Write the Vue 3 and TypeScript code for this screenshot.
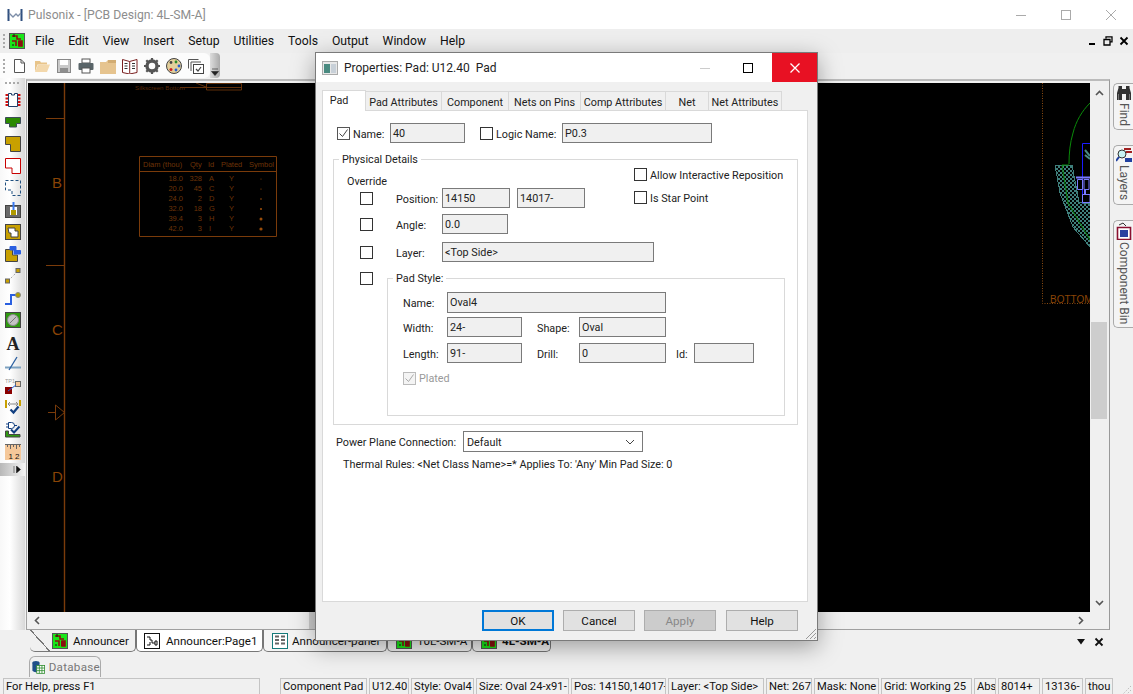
<script setup lang="ts">
interface Cell {
  text: string;
  width: number;
}

interface DocTab {
  name: string;
  width: number;
  kind: string;
  bold?: boolean;
}

const menus = ['File', 'Edit', 'View', 'Insert', 'Setup', 'Utilities', 'Tools', 'Output', 'Window', 'Help'];

const dialogTabs = [
  { name: 'Pad Attributes', width: 76 },
  { name: 'Component', width: 67 },
  { name: 'Nets on Pins', width: 72 },
  { name: 'Comp Attributes', width: 85 },
  { name: 'Net', width: 43 },
  { name: 'Net Attributes', width: 73 },
];

const docTabs: DocTab[] = [
  { name: 'Announcer', width: 106, kind: 'pcb' },
  { name: 'Announcer:Page1', width: 127, kind: 'sch' },
  { name: 'Announcer-panel', width: 124, kind: 'panel' },
  { name: '10L-SM-A', width: 85, kind: 'pcb' },
  { name: '4L-SM-A', width: 79, kind: 'pcb', bold: true },
];

const statusCells: Cell[] = [
  { text: 'Component Pad', width: 87 },
  { text: 'U12.40', width: 40 },
  { text: 'Style: Oval4', width: 63 },
  { text: 'Size: Oval 24-x91-', width: 93 },
  { text: 'Pos: 14150,14017-', width: 95 },
  { text: 'Layer: <Top Side>', width: 96 },
  { text: 'Net: 267', width: 46 },
  { text: 'Mask: None', width: 65 },
  { text: 'Grid: Working 25', width: 91 },
  { text: 'Abs', width: 22 },
  { text: '8014+', width: 42 },
  { text: '13136-', width: 41 },
  { text: 'thou', width: 28 },
];

const holeRows = [
  ['18.0', '328', 'A', 0.5],
  ['20.0', '45', 'C', 0.6],
  ['24.0', '2', 'D', 0.8],
  ['32.0', '18', 'G', 1.1],
  ['39.4', '3', 'H', 1.5],
  ['42.0', '3', 'I', 1.6],
] as const;

const leftTools = Array.from({ length: 17 }, (_, i) => i);
</script>

<template>
  <div class="app">
    <svg class="defs" width="0" height="0">
      <defs>
        <symbol id="pcb" viewBox="0 0 16 16">
          <rect x="0.5" y="0.5" width="15" height="15" fill="#19e619" stroke="#555" />
          <path d="M3 3h5v3h4M3 8h4v5M10 8h3v5h-3z" fill="none" stroke="#8a1010" stroke-width="1.6" />
          <rect x="9" y="8" width="4" height="5" fill="#8a1010" />
          <path d="M5 1v3M3 12h2" stroke="#111" />
        </symbol>
        <pattern id="hatch" width="4" height="4" patternUnits="userSpaceOnUse">
          <rect width="4" height="4" fill="#000" />
          <rect width="2" height="2" fill="#3f7f7c" />
          <rect x="2" y="2" width="2" height="2" fill="#3f7f7c" />
        </pattern>
      </defs>
    </svg>

    <!-- Title bar -->
    <div class="titlebar">
      <svg class="logo" width="16" height="14" viewBox="0 0 16 14">
        <path d="M1.500 1v12M14.500 1v12" stroke="#2f4f7f" stroke-width="2" />
        <path d="M2 5l4 4 3-3 2 2 3-3" fill="none" stroke="#7d8ea8" stroke-width="1.300" />
      </svg>
      <span class="app-title">Pulsonix - [PCB Design: 4L-SM-A]</span>
      <div class="win-btns">
        <svg width="12" height="12" viewBox="0 0 12 12"><path d="M1 6.500h10" stroke="#aaa" /></svg>
        <svg width="12" height="12" viewBox="0 0 12 12"><rect x="1.500" y="1.500" width="9" height="9" fill="none" stroke="#aaa" /></svg>
        <svg width="12" height="12" viewBox="0 0 12 12"><path d="M1 1l10 10M11 1L1 11" stroke="#aaa" /></svg>
      </div>
    </div>

    <!-- Menu bar -->
    <div class="menubar">
      <span class="grip-v"></span>
      <svg class="menu-logo" width="16" height="16"><use href="#pcb" /></svg>
      <span v-for="m in menus" :key="m" class="menu-item">{{ m }}</span>
      <div class="mdi-btns">
        <svg width="10" height="10" viewBox="0 0 10 10"><path d="M2 8h6" stroke="#000" stroke-width="2" /></svg>
        <svg width="10" height="10" viewBox="0 0 10 10"><path d="M3 2.500V.8h6v5H7.500M1 3.500h6v5.500H1z" fill="none" stroke="#000" stroke-width="1.300" /></svg>
        <svg width="10" height="10" viewBox="0 0 10 10"><path d="M1.500 1.500l7 7M8.500 1.500l-7 7" stroke="#000" stroke-width="1.800" /></svg>
      </div>
    </div>

    <!-- Main toolbar -->
    <div class="toolbar-row">
      <div class="toolbar">
        <span class="grip-v"></span>
        <svg width="16" height="16" viewBox="0 0 16 16"><path d="M2.500 1.500h6.500l3.500 3.500v9.500h-10z" fill="#fff" stroke="#555" /><path d="M9 1.500V5h3.500" fill="none" stroke="#555" /></svg>
        <svg width="16" height="16" viewBox="0 0 16 16"><path d="M1 3h5l1 1.500h6v2H3.500L1 14z" fill="#e8c48a" /><path d="M1 14l3-7.500h12L13 14z" fill="#f3d8ac" /></svg>
        <svg width="16" height="16" viewBox="0 0 16 16"><rect x="1.500" y="1.500" width="13" height="13" fill="#c9c9c9" stroke="#888" /><rect x="4" y="2" width="8" height="5" fill="#fff" /><rect x="4" y="10" width="8" height="4.500" fill="#8e8e8e" /></svg>
        <svg width="16" height="16" viewBox="0 0 16 16"><rect x="4" y="1" width="8" height="4" fill="#fff" stroke="#555" /><rect x="0.500" y="5" width="15" height="7" rx="1" fill="#596468" /><rect x="4" y="10" width="8" height="5" fill="#fff" stroke="#555" /></svg>
        <svg width="16" height="16" viewBox="0 0 16 16"><path d="M0 4h6l2-2h8v14H0z" fill="#e6c48f" /><path d="M8 2h8v3H8z" fill="#d2ac72" /></svg>
        <svg width="16" height="16" viewBox="0 0 16 16"><path d="M0.500 1.500l7 2 7.500-2v13l-7.500 1.500-7-1.500z" fill="#fff" stroke="#7a2020" /><path d="M7.700 3.500v12" stroke="#7a2020" /><path d="M2.500 5.500h3M2.500 8h3M2.500 10.500h3M10 5.500h3M10 8h3M10 10.500h3" stroke="#333" /></svg>
        <svg width="16" height="16" viewBox="0 0 16 16"><circle cx="8" cy="8" r="5" fill="none" stroke="#555" stroke-width="3.400" /><path d="M8 0v3M8 13v3M0 8h3M13 8h3M2.300 2.300l2.200 2.200M11.500 11.500l2.200 2.200M13.700 2.300l-2.200 2.200M4.500 11.500l-2.200 2.200" stroke="#555" stroke-width="2.200" /></svg>
        <svg width="16" height="16" viewBox="0 0 16 16"><ellipse cx="8" cy="8" rx="7.500" ry="7.500" fill="#e3cf9b" stroke="#444" /><circle cx="5" cy="4.500" r="1.400" fill="#444" /><circle cx="10" cy="4" r="1.400" fill="#2a8a2a" /><circle cx="13" cy="8" r="1.400" fill="#2a5fd0" /><circle cx="10" cy="12" r="1.400" fill="#2a5fd0" /><circle cx="5" cy="11.500" r="1.500" fill="#d02020" /></svg>
        <svg width="16" height="16" viewBox="0 0 16 16"><path d="M.5 1.500h10M.5 1.500v9M3 4h10M3 4v9" fill="none" stroke="#555" /><rect x="5.500" y="6.500" width="10" height="9" fill="#fff" stroke="#444" /><path d="M8 11l2 2 3-4" fill="none" stroke="#444" stroke-width="1.200" /></svg>
      </div>
      <div class="tool-more">
        <svg width="8" height="8" viewBox="0 0 8 8"><path d="M1 1h6M0.500 3.500h7L4 7.500z" fill="#222" stroke="#222" stroke-width=".6" /></svg>
      </div>
    </div>

    <!-- Workspace -->
    <div class="workspace">
      <div class="lefttools">
        <span class="grip-h"></span>
        <div v-for="i in leftTools" :key="i" class="lt">
          <svg width="16" height="16" viewBox="0 0 16 16">
            <template v-if="i === 0">
              <path d="M3.500 1.500h3v1.500h3V1.500h3v13h-9z" fill="#fff" stroke="#1f3f6a" />
              <path d="M.5 3h2.500M.5 6.500h2.500M.5 10h2.500M.5 13h2.500M13 3h2.500M13 6.500h2.500M13 10h2.500M13 13h2.500" stroke="#d01010" stroke-width="1.800" />
            </template>
            <path v-else-if="i === 1" d="M.5 3.500h15v6h-4v3.500h-7V9.500h-4z" fill="#2a8a00" stroke="#3c4c58" />
            <path v-else-if="i === 2" d="M.5 .5h15v15H5.500V8.500h-5z" fill="#c8a000" stroke="#444" />
            <path v-else-if="i === 3" d="M.5 .5h15v15H7V10H.5z" fill="#fff" stroke="#c80000" />
            <path v-else-if="i === 4" d="M.5 .5h15v15H7V10H.5z" fill="none" stroke="#1f4f7f" stroke-dasharray="3 2" />
            <template v-else-if="i === 5">
              <rect x=".5" y="3.500" width="15" height="12" fill="#6a6a6a" stroke="#444" />
              <rect x="5" y="5" width="7" height="8" fill="#fff" />
              <rect x="6" y="8" width="5" height="5" fill="#b09a00" />
              <path d="M8.500 0v8" stroke="#3a7af0" stroke-width="2" />
            </template>
            <template v-else-if="i === 6">
              <rect x=".5" y=".5" width="15" height="15" fill="#c8a000" stroke="#444" />
              <path d="M3 4h7v3h3v6H6V9H4z" fill="#fff" stroke="#444" />
            </template>
            <template v-else-if="i === 7">
              <path d="M.5 3.500h7V9h5v6.500H.5z" fill="#c8a000" stroke="#444" />
              <path d="M5 .5h6v4h4.500V8H9V4H5z" fill="#2a5fe0" stroke="#2a5fe0" />
            </template>
            <template v-else-if="i === 8">
              <path d="M3 13L13 3" stroke="#aaa" stroke-dasharray="2 2" />
              <rect x="11" y=".5" width="4" height="4" fill="#c8a000" stroke="#666" />
              <rect x=".5" y="11" width="4" height="4" fill="#c8a000" stroke="#666" />
            </template>
            <template v-else-if="i === 9">
              <path d="M0 14h6V5h8" fill="none" stroke="#2a5fe0" stroke-width="2" />
              <circle cx="13" cy="5" r="2.500" fill="#b0a000" stroke="#888" />
            </template>
            <template v-else-if="i === 10">
              <rect x=".5" y=".5" width="15" height="15" fill="#2f9a10" stroke="#444" />
              <circle cx="8" cy="8" r="5.500" fill="#c4c4c4" stroke="#888" />
              <path d="M5 11l6-6" stroke="#777" />
            </template>
            <text v-else-if="i === 11" class="tool-a" x="1.500" y="15.500">A</text>
            <template v-else-if="i === 12">
              <path d="M0 11.500h16" stroke="#7ea2c0" stroke-width="2" />
              <path d="M4 14L12 1" stroke="#2a5fa0" stroke-width="1.300" />
            </template>
            <template v-else-if="i === 13">
              <text class="tool-tp" x="0" y="5">TP1</text>
              <rect x="0" y="9" width="7" height="7" fill="#8a0000" />
              <rect x="10.500" y="3.500" width="5" height="5" fill="#f5c89a" stroke="#666" />
              <path d="M3 13l8-6" stroke="#2a5fd0" />
            </template>
            <template v-else-if="i === 14">
              <rect x="0" y="0" width="2" height="8" fill="#c8a000" />
              <rect x="14" y="0" width="2" height="6" fill="#c8a000" />
              <path d="M3 4h10M3 4l2-2M3 4l2 2M13 4l-2-2M13 4l-2 2" stroke="#888" />
              <path d="M5.500 9.500l3 3 5-6" fill="none" stroke="#123f80" stroke-width="2.200" />
            </template>
            <template v-else-if="i === 15">
              <path d="M.5 15V9h3v3.500H15V15z" fill="#2f9a10" stroke="#444" />
              <path d="M3.500 .5h3a2.500 2.500 0 010 6h-3zM1 2h2.500M1 5h2.500M9 3.500h3" fill="#fff" stroke="#123f80" />
              <path d="M6 7.500l3 3 5.500-6" fill="none" stroke="#123f80" stroke-width="2" />
            </template>
            <template v-else>
              <rect x="0" y="0" width="16" height="16" fill="#f5c89a" />
              <path d="M0 .5h16M2.500 0v3M5.500 0v5M8.500 0v3M11.500 0v5M14.500 0v3" stroke="#666" />
              <text class="tool-ruler" x="3.500" y="14.500">1</text>
              <text class="tool-ruler" x="10" y="14.500">2</text>
            </template>
          </svg>
        </div>
        <div class="left-more">
          <svg width="8" height="7" viewBox="0 0 8 7"><path d="M1 0v7M3.500 0l4 3.500-4 3.500z" fill="#111" stroke="#111" stroke-width=".5" /></svg>
        </div>
      </div>

      <div class="frame">
        <div class="frame-inner">
          <svg class="canvas" viewBox="28 83 1062 529" width="1062" height="529">
            <rect x="28" y="83" width="1062" height="529" fill="#000" />
            <g stroke="#7a3b0a" fill="none">
              <path d="M64.500 83v529" stroke-width="1.400" />
              <path d="M46 118.500h18M46 265.500h18M48 412.500h7M55.500 405l9 7.500-9 7.500z" />
              <path d="M139.500 156.500h137v80h-137zM139.500 171.500h137" />
              <path d="M180 87.500h26M196 83l10 4M206.500 83.500h35v6.500h-35zM206.500 87.500h35" stroke-width=".8" />
            </g>
            <g class="cv-letter">
              <text x="52" y="188">B</text>
              <text x="52" y="335">C</text>
              <text x="52" y="482">D</text>
            </g>
            <text class="cv-tiny" x="135" y="90">Silkscreen Bottom</text>
            <g class="cv-small">
              <text x="143" y="167">Diam (thou)</text>
              <text x="190" y="167">Qty</text>
              <text x="208" y="167">Id</text>
              <text x="221" y="167">Plated</text>
              <text x="249" y="167">Symbol</text>
              <g v-for="(r, i) in holeRows" :key="r[0]">
                <text x="183" :y="181 + i * 10" text-anchor="end">{{ r[0] }}</text>
                <text x="202" :y="181 + i * 10" text-anchor="end">{{ r[1] }}</text>
                <text x="209" :y="181 + i * 10">{{ r[2] }}</text>
                <text x="229" :y="181 + i * 10">Y</text>
                <circle cx="261" :cy="179 + i * 10" :r="r[3]" fill="#9a4d0a" />
              </g>
            </g>
            <path d="M1042.500 83v220.500H1090" fill="none" stroke="#8a4a10" stroke-dasharray="1 1.500" />
            <text class="cv-bottom" x="1050" y="303">BOTTOM</text>
            <path class="hatched" d="M1055 165h17l7 37 11 2v43l-17-20-13-34z" fill="url(#hatch)" stroke="#3f7f7c" />
            <path d="M1090 103c-8 8-14 18-17 30-3 10-4 20-4 31M1069 165h-7l6 38 22 37" fill="none" stroke="#0a8a0a" />
            <path d="M1090 143.500h-7.500v60" fill="none" stroke="#1a1aff" />
            <path d="M1085 150l5 6M1085 155l5 4" stroke="#4a8a86" stroke-width="2" />
            <path d="M1077.500 179.500h5v10h-5zM1084 179.500h5v10h-5zM1082.500 194.500h7.500v8h-7.500z" fill="none" stroke="#7a7aff" />
            <path d="M1076 177.500h14M1085 190v4" stroke="#7a7aff" stroke-width="2" />
          </svg>
          <div class="vscroll">
            <svg class="chev" width="9" height="6" viewBox="0 0 9 6"><path d="M1 5l3.500-3.500L8 5" fill="none" stroke="#555" stroke-width="1.600" /></svg>
            <div class="vthumb"></div>
            <svg class="chev" width="9" height="6" viewBox="0 0 9 6"><path d="M1 1l3.500 3.500L8 1" fill="none" stroke="#555" stroke-width="1.600" /></svg>
          </div>
        </div>
        <div class="hscroll">
          <svg width="6" height="9" viewBox="0 0 6 9"><path d="M5 1L1.500 4.500 5 8" fill="none" stroke="#555" stroke-width="1.600" /></svg>
          <div class="hthumb"></div>
          <svg width="6" height="9" viewBox="0 0 6 9"><path d="M1 1l3.500 3.500L1 8" fill="none" stroke="#555" stroke-width="1.600" /></svg>
        </div>
      </div>

      <div class="side-tabs">
        <div class="side-tab find">
          <svg width="16" height="16" viewBox="0 0 16 16"><path d="M1 15V8l1.500-5V1h3.500v14zM15 15V8l-1.500-5V1H10v14zM6 4h4v5H6z" fill="#333" /><path d="M2.500 9v6M13.500 9v6" stroke="#777" /></svg>
          <span>Find</span>
        </div>
        <div class="side-tab layers">
          <svg width="16" height="16" viewBox="0 0 16 16"><path d="M8 1h7v2H8zM10 4h6v2h-6z" fill="#a02020" /><path d="M9 11h7v4H9z" fill="#2040a0" /><circle cx="6" cy="7" r="4" fill="#c8f4f4" stroke="#333" /><path d="M3 10l-3 4" stroke="#2040a0" stroke-width="2" /></svg>
          <span>Layers</span>
        </div>
        <div class="side-tab bin">
          <svg width="16" height="18" viewBox="0 0 16 18"><path d="M1.500 5.500h13v12h-13z" fill="#fff" stroke="#8a1030" stroke-width="1.600" /><rect x="4" y="8" width="8" height="7" fill="#2a40a0" /><path d="M3 3l4-2 3 3" fill="none" stroke="#333" /></svg>
          <span>Component Bin</span>
        </div>
      </div>
    </div>

    <!-- Document tabs -->
    <div class="docbar">
      <div class="doc-tabs">
        <div v-for="t in docTabs" :key="t.name" class="doc-tab" :class="{ bold: t.bold }" :style="{ width: t.width + 'px' }">
          <svg v-if="t.kind === 'pcb'" width="16" height="16"><use href="#pcb" /></svg>
          <svg v-else-if="t.kind === 'sch'" width="16" height="16" viewBox="0 0 16 16"><rect x=".5" y=".5" width="15" height="15" fill="#fff" stroke="#111" /><path d="M3 4h3v3h2v3h3M3 12h3V9M11 8h2v4h-2z" fill="none" stroke="#111" /></svg>
          <svg v-else width="16" height="16" viewBox="0 0 16 16"><rect x=".5" y=".5" width="15" height="15" fill="#fff" stroke="#167a7a" /><path d="M3 3.500h4M9 3.500h4M3 7h4M9 7h4M3 10.500h4M9 10.500h4" stroke="#666" stroke-width="2" /></svg>
          <span>{{ t.name }}</span>
        </div>
      </div>
      <div class="doc-ctrl">
        <svg width="10" height="6" viewBox="0 0 10 6"><path d="M1 0h8L5 5.500z" fill="#111" /></svg>
        <svg width="10" height="10" viewBox="0 0 10 10"><path d="M1.500 1.500l7 7M8.500 1.500l-7 7" stroke="#111" stroke-width="1.800" /></svg>
      </div>
    </div>

    <div class="dbbar">
      <div class="db-tab">
        <svg width="16" height="16" viewBox="0 0 16 16"><ellipse cx="5" cy="2.500" rx="4.500" ry="2" fill="#1f4f8a" /><path d="M.5 2.500v10c0 1 2 2 4.500 2s4.500-1 4.500-2v-10z" fill="#1f4f8a" /><rect x="6" y="6" width="10" height="10" fill="#fff" stroke="#2a8a2a" /><path d="M9.300 6v10M12.600 6v10M6 9.300h10M6 12.600h10" stroke="#2a8a2a" /></svg>
        <span>Database</span>
      </div>
    </div>

    <!-- Status bar -->
    <div class="statusbar">
      <div class="st-cell st-help">For Help, press F1</div>
      <div class="st-cells">
        <div v-for="c in statusCells" :key="c.text" class="st-cell" :style="{ width: c.width + 'px' }">{{ c.text }}</div>
      </div>
      <svg class="st-grip" width="12" height="12" viewBox="0 0 12 12"><path d="M11 3L3 11M11 7l-4 4" stroke="#bbb" stroke-dasharray="1.500 1.500" /></svg>
    </div>

    <!-- Properties dialog -->
    <div class="dialog">
      <div class="dlg-title">
        <svg width="16" height="14" viewBox="0 0 16 14"><rect x=".5" y=".5" width="15" height="13" fill="#e8e8e8" stroke="#aaa" /><rect x="2" y="3" width="6" height="9" fill="#4a8a80" /><rect x="9" y="3" width="5" height="9" fill="#c8d0d8" /></svg>
        <span class="dlg-caption">Properties: Pad: U12.40&nbsp; Pad</span>
        <div class="dlg-btn">
          <svg width="12" height="12" viewBox="0 0 12 12"><path d="M1 6.500h10" stroke="#ccc" /></svg>
        </div>
        <div class="dlg-btn max">
          <svg width="12" height="12" viewBox="0 0 12 12"><rect x="1.500" y="1.500" width="9" height="9" fill="none" stroke="#000" /></svg>
        </div>
        <div class="dlg-btn close">
          <svg width="12" height="12" viewBox="0 0 12 12"><path d="M1.500 1.500l9 9M10.500 1.500l-9 9" stroke="#fff" stroke-width="1.300" /></svg>
        </div>
      </div>

      <div class="dlg-tabs">
        <div class="dlg-tab active">Pad</div>
        <div v-for="t in dialogTabs" :key="t.name" class="dlg-tab" :style="{ width: t.width + 'px' }">{{ t.name }}</div>
      </div>

      <div class="panel">
        <div class="row name-row">
          <span class="cb checked">
            <svg width="11" height="11" viewBox="0 0 11 11"><path d="M1.500 5.500l3 3 5-7" fill="none" stroke="#444" /></svg>
          </span>
          <label class="l-name">Name:</label>
          <div class="fld w75">40</div>
          <span class="cb logic-cb"></span>
          <label class="l-logic">Logic Name:</label>
          <div class="fld w150">P0.3</div>
        </div>

        <fieldset class="phys">
          <legend>Physical Details</legend>
          <div class="phys-top">
            <div class="phys-left">
              <div class="override">Override</div>
              <div class="row">
                <span class="cb o-cb"></span>
                <label class="l-o">Position:</label>
                <div class="fld w68">14150</div>
                <div class="fld w68 ml7">14017-</div>
              </div>
            </div>
            <div class="phys-right">
              <div class="check-line"><span class="cb"></span><span class="cl-text">Allow Interactive Reposition</span></div>
              <div class="check-line star"><span class="cb"></span><span class="cl-text">Is Star Point</span></div>
            </div>
          </div>
          <div class="row angle">
            <span class="cb o-cb"></span>
            <label class="l-o">Angle:</label>
            <div class="fld w66">0.0</div>
          </div>
          <div class="row layer">
            <span class="cb o-cb"></span>
            <label class="l-o">Layer:</label>
            <div class="fld w212">&lt;Top Side&gt;</div>
          </div>
          <div class="pad-wrap">
            <span class="cb o-cb pad-cb"></span>
            <fieldset class="pad-style">
              <legend>Pad Style:</legend>
              <div class="row p-name">
                <label class="l-p">Name:</label>
                <div class="fld w219">Oval4</div>
              </div>
              <div class="row p-width">
                <label class="l-p">Width:</label>
                <div class="fld w75">24-</div>
                <label class="l-s">Shape:</label>
                <div class="fld w87">Oval</div>
              </div>
              <div class="row p-length">
                <label class="l-p">Length:</label>
                <div class="fld w75">91-</div>
                <label class="l-s">Drill:</label>
                <div class="fld w87">0</div>
                <label class="l-id">Id:</label>
                <div class="fld w60"></div>
              </div>
              <div class="plated">
                <span class="cb disabled">
                  <svg width="11" height="11" viewBox="0 0 11 11"><path d="M1.500 5.500l3 3 5-7" fill="none" stroke="#aaa" /></svg>
                </span>
                <span>Plated</span>
              </div>
            </fieldset>
          </div>
        </fieldset>

        <div class="row power">
          <label class="l-power">Power Plane Connection:</label>
          <div class="select">
            <span>Default</span>
            <svg width="10" height="6" viewBox="0 0 10 6"><path d="M1 1l4 4 4-4" fill="none" stroke="#444" /></svg>
          </div>
        </div>
        <div class="thermal">Thermal Rules: &lt;Net Class Name&gt;=* Applies To: 'Any' Min Pad Size: 0</div>
      </div>

      <div class="dlg-foot">
        <button class="btn default">OK</button>
        <button class="btn">Cancel</button>
        <button class="btn off">Apply</button>
        <button class="btn help">Help</button>
      </div>
      <svg class="dlg-grip" width="12" height="12" viewBox="0 0 12 12"><path d="M11 1L1 11M11 5l-6 6M11 9l-2 2" stroke="#999" /></svg>
    </div>
  </div>
</template>

<style>
html, body { margin: 0; background: #f0f0f0; }
</style>

<style scoped>
.app {
  position: relative;
  width: 1133px;
  height: 694px;
  overflow: hidden;
  display: flex;
  flex-direction: column;
  background: #f0f0f0;
  color: #111;
  font-family: Roboto, "Noto Sans", sans-serif;
  font-size: 11.6px;
}
.defs { position: absolute; }

.titlebar { height: 29px; flex: none; background: #fff; display: flex; align-items: center; }
.logo { margin-left: 7px; }
.app-title { margin-left: 5px; color: #8d8d8d; font-size: 12.2px; }
.win-btns { margin-left: auto; display: flex; gap: 33px; padding-right: 16px; }

.menubar { height: 24px; flex: none; display: flex; align-items: center; background: #eee; position: relative; }
.grip-v { width: 2px; height: 14px; margin-left: 3px; flex: none; background: repeating-linear-gradient(#aaa 0 2px, transparent 2px 4px); }
.menu-logo { margin-left: 4px; margin-right: 3px; }
.menu-item { padding: 0 7px; font-size: 12.2px; }
.mdi-btns { margin-left: auto; display: flex; gap: 6px; padding-right: 4px; }

.toolbar-row { height: 25px; flex: none; display: flex; }
.toolbar { width: 210px; display: flex; align-items: center; gap: 6px; background: #fcfcfc; border-radius: 0 6px 6px 0; }
.toolbar .grip-v { margin-right: 1px; }
.tool-more { width: 10px; background: linear-gradient(90deg, #ddd, #aaa); border-radius: 0 4px 4px 0; display: flex; align-items: flex-end; justify-content: center; padding-bottom: 2px; box-sizing: border-box; }

.workspace { height: 552px; flex: none; display: flex; }
.lefttools { width: 25px; flex: none; background: linear-gradient(90deg, #f8f8f8, #fff 40%, #d8d8d8); display: flex; flex-direction: column; align-items: center; }
.grip-h { width: 16px; height: 2px; margin: 4px 0 5px; background: repeating-linear-gradient(90deg, #aaa 0 2px, transparent 2px 4px); }
.lt { height: 22px; flex: none; display: flex; align-items: center; justify-content: center; }
.left-more { width: 100%; height: 13px; background: linear-gradient(90deg, #b8b8b8, #f4f4f4); display: flex; align-items: center; justify-content: flex-end; padding-right: 4px; box-sizing: border-box; }
.tool-a { font: bold 18px "Liberation Serif", serif; fill: #222; }
.tool-tp { font: 5.500px "Liberation Sans", sans-serif; fill: #999; }
.tool-ruler { font: 8px "Liberation Sans", sans-serif; fill: #111; }

.frame { width: 1084px; margin-left: 1px; flex: none; display: flex; flex-direction: column; border: 1px solid #a0a0a0; border-top: 2px solid #bbb; border-right: 1px solid #999; box-sizing: border-box; margin-top: 1px; height: 551px; padding: 2px 0 0 1px; }
.frame-inner { display: flex; height: 529px; flex: none; }
.canvas { display: block; flex: none; }
.hatched { shape-rendering: crispEdges; }
.vscroll { width: 18px; flex: none; display: flex; flex-direction: column; align-items: center; padding: 7px 0 6px; box-sizing: border-box; }
.vthumb { width: 16px; height: 97px; background: #cdcdcd; margin-top: 226px; margin-bottom: auto; }
.chev { flex: none; }
.hscroll { height: 17px; flex: none; display: flex; align-items: center; padding: 0 25px 0 6px; }
.hthumb { width: 120px; height: 17px; margin-left: 269px; margin-right: auto; background: #cdcdcd; }

.side-tabs { margin-left: 3px; flex: 1; min-width: 0; display: flex; flex-direction: column; padding-top: 5px; }
.side-tab { display: flex; flex-direction: column; align-items: center; gap: 2px; border: 1px solid #aaa; border-right: none; border-radius: 5px 0 0 5px; color: #555; font-size: 12px; padding-top: 1px; box-sizing: border-box; background: #f4f4f4; }
.side-tab svg { flex: none; }
.side-tab span { writing-mode: vertical-rl; white-space: nowrap; }
.find { height: 47px; }
.layers { height: 60px; margin-top: 15px; }
.bin { height: 108px; margin-top: 15px; }

.cv-letter text { font: 15px "Liberation Sans", sans-serif; fill: #8a4406; }
.cv-tiny { font: 6.200px "Liberation Sans", sans-serif; fill: #5a2a08; }
.cv-small text { font: 7.500px "Liberation Sans", sans-serif; fill: #6e3408; }
.cv-bottom { font: 10px "Liberation Sans", sans-serif; fill: #8a4406; }

.docbar { height: 23px; flex: none; display: flex; }
.doc-tabs { margin-left: 30px; display: flex; }
.doc-tab { height: 22px; box-sizing: border-box; display: flex; align-items: center; gap: 5px; background: #f8f8f8; border: 1px solid #777; border-top: none; border-radius: 0 0 5px 5px; white-space: nowrap; overflow: hidden; }
.doc-tab:first-child { padding-left: 22px; background: linear-gradient(to top right, transparent 48%, #777 48% 52%, transparent 52%) no-repeat left / 20px 22px; border-left: none; }
.doc-tab:nth-child(2) { padding-left: 7px; background: #fff; gap: 6px; }
.doc-tab:nth-child(3) { padding-left: 8px; background: #f4f4f4; gap: 4px; }
.doc-tab:nth-child(4), .doc-tab:nth-child(5) { padding-left: 8px; background: #f0f0f0; }
.doc-tab.bold { font-weight: 700; }
.doc-ctrl { margin-left: auto; padding: 0 29px 0 0; display: flex; align-items: center; gap: 8px; }

.dbbar { height: 24px; flex: none; padding-left: 29px; padding-top: 3px; box-sizing: border-box; }
.db-tab { width: 72px; height: 21px; box-sizing: border-box; border: 1px solid #aaa; border-bottom: none; border-radius: 6px 6px 0 0; display: flex; align-items: center; gap: 4px; padding-left: 2px; color: #777; letter-spacing: .3px; }

.statusbar { flex: 1; display: flex; align-items: stretch; padding-top: 1px; }
.st-cell { box-sizing: border-box; border: 1px solid #c4c4c4; border-bottom: none; padding-left: 2px; white-space: nowrap; overflow: hidden; line-height: 16px; font-size: 11.2px; }
.st-help { width: 257px; margin-left: 3px; }
.st-cells { margin-left: 20px; display: flex; gap: 2px; }
.st-grip { margin: auto 1px 0 auto; }

.dialog {
  position: absolute;
  left: 315px;
  top: 52px;
  width: 503px;
  height: 589px;
  box-sizing: border-box;
  background: #f0f0f0;
  border: 1px solid #7a7a7a;
  box-shadow: 0 6px 22px rgba(0, 0, 0, 0.35);
  display: flex;
  flex-direction: column;
  font-family: Roboto, "Liberation Sans", sans-serif;
  font-size: 10.8px;
  color: #222;
}
.dlg-title { height: 29px; flex: none; background: #fff; display: flex; align-items: center; padding-left: 6px; }
.dlg-caption { margin-left: 6px; font-size: 12px; margin-right: auto; }
.dlg-btn { width: 45px; height: 29px; box-sizing: border-box; display: flex; align-items: center; justify-content: center; }
.dlg-btn.max { padding-right: 3px; }
.dlg-btn.close { background: #e81123; }
.dlg-tabs { height: 28px; flex: none; display: flex; align-items: flex-end; padding-left: 6px; }
.dlg-tab { height: 19px; box-sizing: border-box; border: 1px solid #d9d9d9; border-left: none; border-bottom: none; display: flex; align-items: center; justify-content: center; background: #f0f0f0; white-space: nowrap; padding-top: 2px; }
.dlg-tab.active { width: 44px; height: 21px; background: #fff; border-left: 1px solid #d9d9d9; position: relative; top: 1px; padding: 0 10px 2px 0; box-sizing: border-box; z-index: 1; }

.panel { margin: 0 9px 0 6px; height: 492px; flex: none; box-sizing: border-box; background: #fff; border: 1px solid #d9d9d9; }
.row { display: flex; align-items: center; }
.row label { padding-top: 2px; box-sizing: border-box; }
.name-row { margin: 12px 0 0 14px; height: 20px; }
.cb { width: 13px; height: 13px; flex: none; box-sizing: border-box; border: 1px solid #333; background: #fff; display: inline-flex; align-items: center; justify-content: center; }
.cb.checked { border-color: #555; }
.cb.disabled { border-color: #bbb; background: #f4f4f4; }
.l-name { margin-left: 3px; width: 37px; }
.logic-cb { margin-left: 15px; }
.l-logic { margin-left: 3px; width: 66px; }
.fld { height: 20px; box-sizing: border-box; flex: none; background: #f0f0f0; border: 1px solid #7a7a7a; padding: 0 2px; line-height: 19px; color: #222; }
.w60 { width: 60px; }
.w66 { width: 66px; }
.w68 { width: 68px; }
.w75 { width: 75px; }
.w87 { width: 87px; }
.w150 { width: 150px; }
.w212 { width: 212px; }
.w219 { width: 219px; }
.ml7 { margin-left: 7px; }

fieldset { margin: 0; padding: 0; border: 1px solid #d9d9d9; min-width: 0; box-sizing: border-box; }
legend { padding: 1px 3px 0; margin-left: 5px; height: 14px; line-height: 14px; box-sizing: border-box; }
.phys { margin: 9px 0 0 10px; width: 465px; padding-bottom: 8px; }
.phys-top { display: flex; }
.phys-left { width: 300px; }
.override { margin: 8px 0 0 13px; height: 14px; line-height: 16px; }
.phys-left .row, .angle, .layer { padding-left: 26px; height: 20px; }
.o-cb { margin-right: 23px; }
.l-o { width: 46px; }
.phys-right { padding-top: 2px; }
.check-line { display: flex; align-items: center; gap: 3px; height: 13px; }
.cl-text { padding-top: 2px; }
.star { margin-top: 10px; }
.angle { margin-top: 6px; }
.layer { margin-top: 8px; }
.pad-wrap { margin-top: 9px; display: flex; padding-left: 26px; }
.pad-cb { margin: 1px 14px 0 0; }
.pad-style { width: 398px; height: 145px; }
.pad-style .row, .plated { margin-left: 15px; }
.p-name { margin-top: 7px; height: 21px; }
.p-name .fld { height: 21px; }
.p-width { margin-top: 4px; height: 20px; }
.p-length { margin-top: 6px; height: 20px; }
.l-p { width: 44px; }
.l-s { margin-left: 15px; width: 42px; }
.l-id { margin-left: 10px; width: 18px; }
.plated { margin-top: 9px; display: flex; align-items: center; gap: 3px; color: #999; height: 13px; }

.power { margin: 6px 0 0 13px; height: 21px; }
.l-power { width: 127px; }
.select { width: 180px; height: 21px; box-sizing: border-box; border: 1px solid #7a7a7a; background: #fff; display: flex; align-items: center; justify-content: space-between; padding: 1px 7px 0 3px; }
.thermal { margin: 6px 0 0 20px; line-height: 14px; color: #222; }

.dlg-foot { display: flex; gap: 9px; padding: 8px 0 0 166px; }
.btn { width: 72px; height: 21px; box-sizing: border-box; border: 1px solid #adadad; background: #e1e1e1; font: inherit; font-size: 11.6px; color: #111; padding: 1px 0 0; }
.btn.default { border: 2px solid #0078d7; }
.btn.off { background: #cccccc; color: #888; }
.btn.help { margin-left: 1px; }
.dlg-grip { position: absolute; right: 0; bottom: 0; }
</style>
